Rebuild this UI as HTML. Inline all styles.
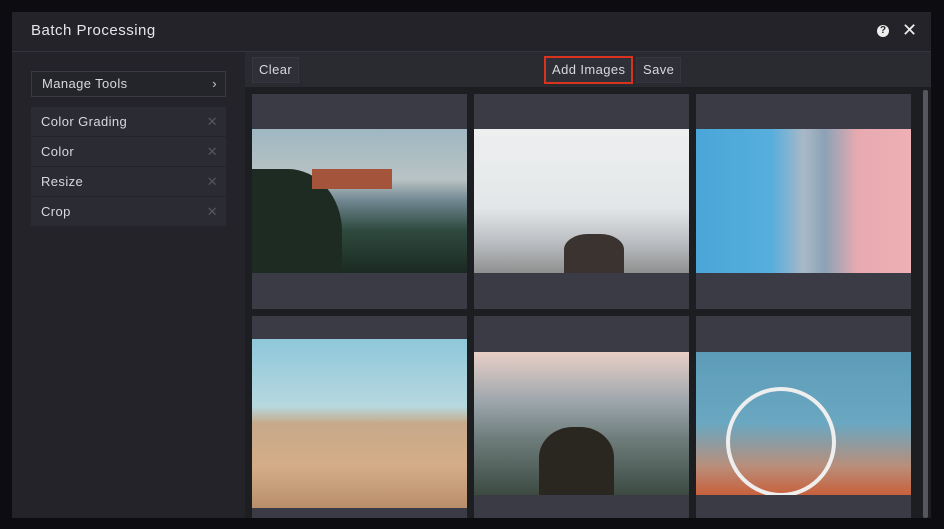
<!DOCTYPE html><html><head><style>
body{margin:0;width:944px;height:529px;background:#0d0d11;font-family:"Liberation Sans",sans-serif;overflow:hidden;position:relative}
.m{position:absolute;left:12px;top:12px;width:919px;height:506px;background:#232329;overflow:hidden}
.hd{position:absolute;left:0;top:0;width:919px;height:39px;border-bottom:1px solid #34353c;color:#e6e6ea;font-size:15px}
.hd span{position:absolute;left:19px;top:10px;letter-spacing:.5px}
.lp .it{position:absolute;left:19px;width:195px;height:29px;background:#2b2c33;color:#d8d8dc;font-size:13px;line-height:29px;box-sizing:border-box;padding-left:10px;letter-spacing:.4px}
.lp .it b{position:absolute;right:8px;top:0;font-weight:normal;color:#55565e;font-size:13px}
.tb{position:absolute;left:233px;top:40px;width:686px;height:35px;background:#2a2b31}
.btn{position:absolute;top:5px;height:24px;line-height:24px;color:#d8d8dc;font-size:13px;padding:0 6px;background:#2f3037;border:1px solid #36373e;letter-spacing:.4px}
.gr{position:absolute;left:233px;top:75px;width:686px;height:431px;background:#1d1e22}
.c{position:absolute;width:215px;background:#3a3b45}
.p{position:absolute;left:0;width:215px;overflow:hidden}
</style></head><body>
<div class="m">
<div class="hd"><span>Batch Processing</span>
<div style="position:absolute;left:865px;top:13px;width:12px;height:12px;border-radius:50%;background:#eee;color:#232329;font-size:10px;font-weight:bold;text-align:center;line-height:12px">?</div>
<div style="position:absolute;left:890px;top:8px;color:#eee;font-size:18px">✕</div></div>
<div class="lp">
<div class="it" style="top:59px;background:#24252b;border:1px solid #3a3b42;height:26px;line-height:24px">Manage Tools<b style="color:#ccc">›</b></div>
<div class="it" style="top:95px">Color Grading<b>✕</b></div>
<div class="it" style="top:125px">Color<b>✕</b></div>
<div class="it" style="top:155px">Resize<b>✕</b></div>
<div class="it" style="top:185px">Crop<b>✕</b></div>
</div>
<div class="tb">
<div class="btn" style="left:7px">Clear</div>
<div class="btn" style="left:299px;border:2px solid #d9331f;top:4px">Add Images</div>
<div class="btn" style="left:391px">Save</div>
</div>
<div class="gr">
<div style="position:absolute;left:678px;top:3px;width:5px;height:428px;background:#55565e;border-radius:2px"></div>
<div class="c" style="left:7px;top:7px;height:215px"><div class="p" style="top:35px;height:144px;background:linear-gradient(180deg,#9fb7c2 0%,#b9c3c4 35%,#6f8690 50%,#2f4a3f 70%,#1b2a22 100%)"><div style="position:absolute;left:0;top:40px;width:90px;height:104px;background:#1e2b22;border-radius:0 60% 0 0"></div><div style="position:absolute;left:60px;top:40px;width:80px;height:20px;background:#a4543a"></div></div></div>
<div class="c" style="left:229px;top:7px;height:215px"><div class="p" style="top:35px;height:144px;background:linear-gradient(180deg,#eef0f0 0%,#e3e6e8 55%,#b8bcc0 80%,#8f8f8f 100%)"><div style="position:absolute;left:90px;top:105px;width:60px;height:39px;background:#3a3330;border-radius:40% 40% 0 0"></div></div></div>
<div class="c" style="left:451px;top:7px;height:215px"><div class="p" style="top:35px;height:144px;background:linear-gradient(90deg,#4aa6d8 0%,#56aedc 35%,#a9b8c8 50%,#8ca2b5 60%,#e7aab0 75%,#eeb0b5 100%)"></div></div>
<div class="c" style="left:7px;top:229px;height:210px"><div class="p" style="top:23px;height:169px;background:linear-gradient(180deg,#8ec7da 0%,#b7d8df 40%,#c7a98a 50%,#d4ad88 75%,#b88f6a 100%)"></div></div>
<div class="c" style="left:229px;top:229px;height:210px"><div class="p" style="top:36px;height:143px;background:linear-gradient(180deg,#e9cfc6 0%,#9ca6ac 35%,#6f7e7c 60%,#3c4a42 100%)"><div style="position:absolute;left:65px;top:75px;width:75px;height:68px;background:#2a2620;border-radius:45% 45% 0 0"></div></div></div>
<div class="c" style="left:451px;top:229px;height:210px"><div class="p" style="top:36px;height:143px;background:linear-gradient(180deg,#5d9cb8 0%,#6aa7c1 50%,#b98e7a 80%,#c8603c 100%)"><div style="position:absolute;left:30px;top:35px;width:110px;height:110px;border-radius:50%;border:4px solid #eee;box-sizing:border-box"></div></div></div>
</div>
</div>
</body></html>
